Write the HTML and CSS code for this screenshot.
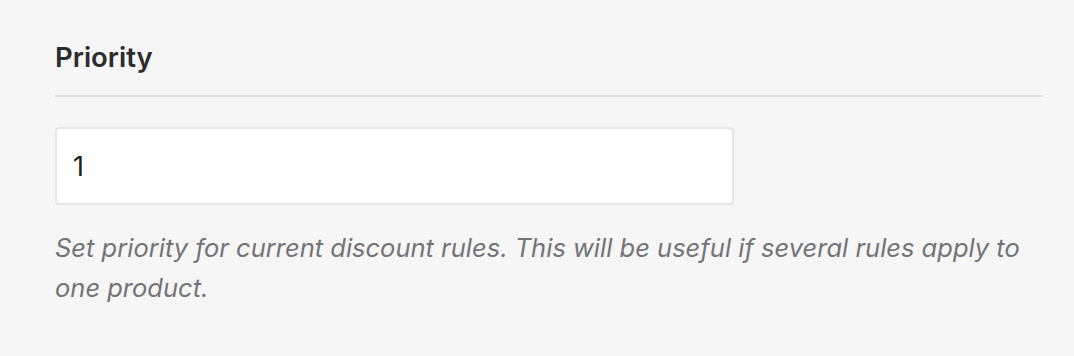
FILE: index.html
```html
<!DOCTYPE html>
<html>
<head>
<meta charset="utf-8">
<link rel="stylesheet" href="styles.css">
</head>
<body>
<section class="panel">
  <h2 class="title">Priority</h2>
  <div class="field">
    <input class="input" type="text" value="1">
    <p class="desc">Set priority for current discount rules. This will be useful if several rules apply to one product.</p>
  </div>
</section>
</body>
</html>
```
FILE: styles.css
```css
html, body {
  margin: 0;
  padding: 0;
  background: #f6f6f6;
}
body {
  font-family: Inter, "Noto Sans", sans-serif;
  width: 1074px;
  height: 356px;
  overflow: hidden;
}
.panel {
  padding: 39px 31px 0 55px;
}
.title {
  margin: 0;
  font-size: 27.5px;
  font-weight: 600;
  color: #2c2c2e;
  line-height: 36px;
  padding-bottom: 20px;
  border-bottom: 2px solid #dedede;
}
.field {
  padding-top: 30px;
}
.input {
  display: block;
  box-sizing: border-box;
  width: 679px;
  height: 78px;
  margin: 0;
  padding: 0 16px;
  background: #fff;
  border: 2px solid #e6e6e6;
  border-radius: 4px;
  font-family: Inter, "Noto Sans", sans-serif;
  font-size: 27px;
  color: #1e1e1e;
  outline: none;
}
.desc {
  margin: 23px 0 0;
  font-size: 25.5px;
  font-style: italic;
  line-height: 40px;
  color: #737378;
}
```
